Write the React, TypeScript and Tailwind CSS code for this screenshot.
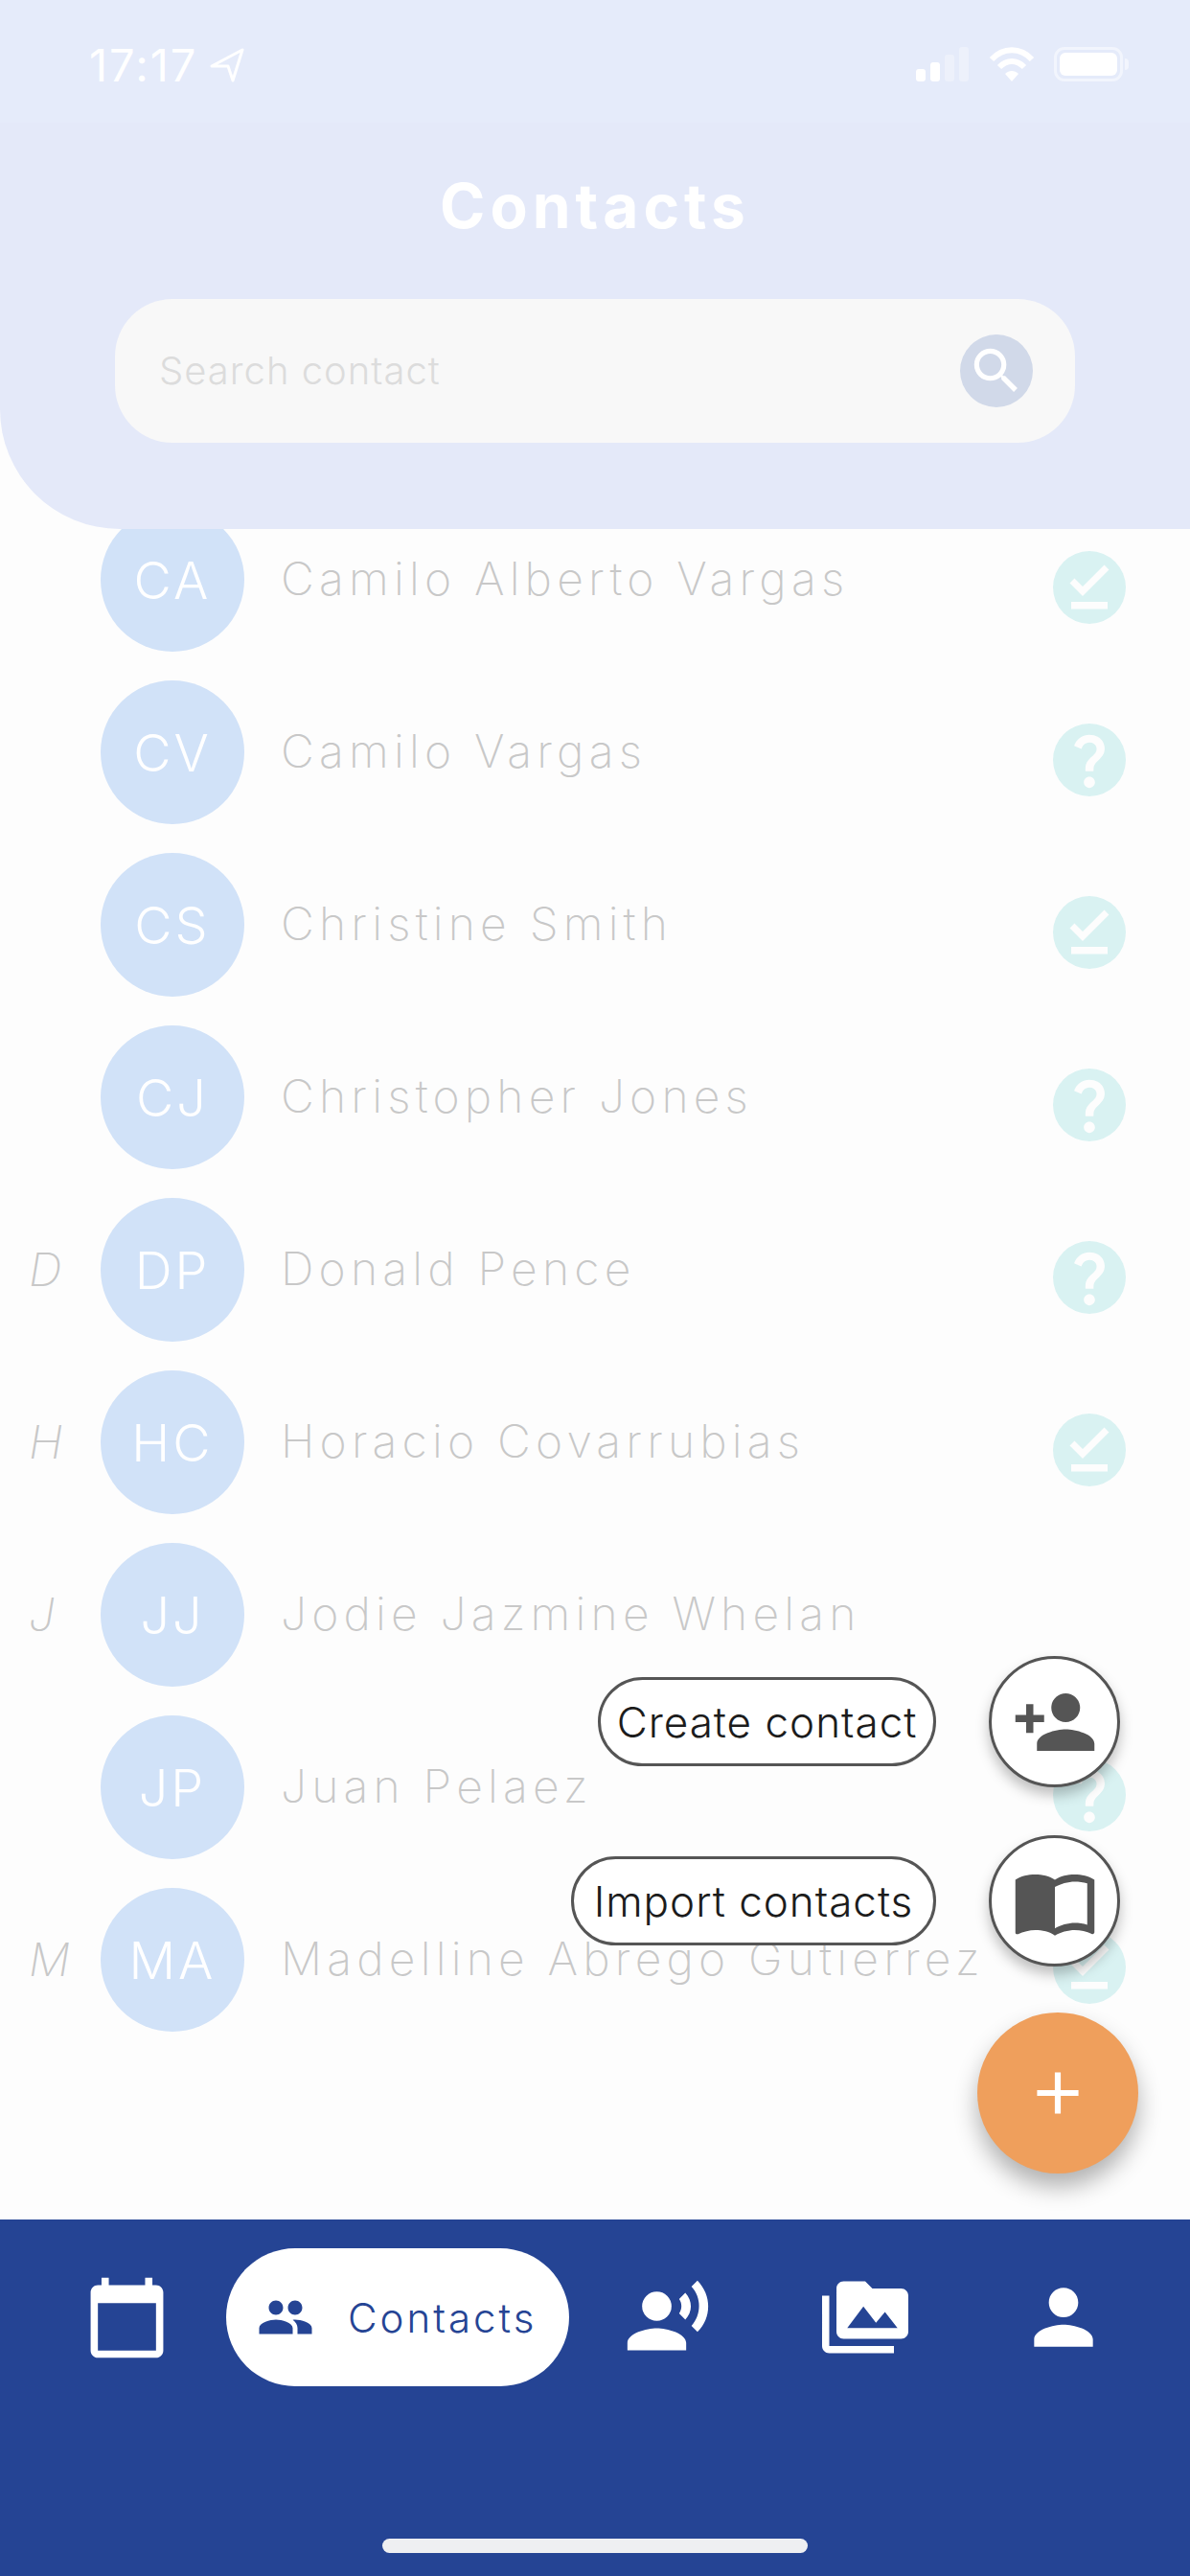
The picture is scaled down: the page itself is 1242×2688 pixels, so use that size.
import { MdAdd, MdCalendarToday, MdImportContacts, MdPeople, MdPermMedia, MdPerson, MdPersonAdd, MdQuestionMark, MdRecordVoiceOver, MdSearch } from "react-icons/md";

type Status = "done" | "unknown" | "none";

const contacts: { letter: string; initials: string; name: string; status: Status }[] = [
  { letter: "", initials: "CA", name: "Camilo Alberto Vargas", status: "done" },
  { letter: "", initials: "CV", name: "Camilo Vargas", status: "unknown" },
  { letter: "", initials: "CS", name: "Christine Smith", status: "done" },
  { letter: "", initials: "CJ", name: "Christopher Jones", status: "unknown" },
  { letter: "D", initials: "DP", name: "Donald Pence", status: "unknown" },
  { letter: "H", initials: "HC", name: "Horacio Covarrubias", status: "done" },
  { letter: "J", initials: "JJ", name: "Jodie Jazmine Whelan", status: "none" },
  { letter: "", initials: "JP", name: "Juan Pelaez", status: "unknown" },
  { letter: "M", initials: "MA", name: "Madelline Abrego Gutierrez", status: "done" },
];

function StatusBar() {
  return (
    <div className="h-[128px] bg-[#e5ebfa] flex justify-between items-start pt-[46px] pl-[93px] pr-[64px] text-white">
      <div className="flex items-center gap-[13px]">
        <span className="text-[47px] leading-[44px] font-normal tracking-[2px]">17:17</span>
        <svg width="36" height="36" viewBox="0 0 36 36" fill="none" stroke="white" strokeWidth="3" strokeLinejoin="round">
          <path d="M2 19 L34 2 L24 34 L19 19 Z" />
        </svg>
      </div>
      <div className="flex items-center gap-[20px] pt-[3px]">
        <svg width="56" height="36" viewBox="0 0 56 36" fill="white">
          <rect x="0" y="23" width="10" height="13" rx="3" />
          <rect x="15" y="16" width="10" height="20" rx="3" />
          <rect x="30" y="8" width="10" height="28" rx="3" opacity="0.3" />
          <rect x="45" y="0" width="10" height="36" rx="3" opacity="0.3" />
        </svg>
        <svg width="48" height="36" viewBox="0 0 48 36" fill="none" stroke="white" strokeWidth="6">
          <path d="M3 13 C15 0 33 0 45 13" />
          <path d="M11 21 C19 13 29 13 37 21" />
          <path d="M24 36 L17 28 C21 24 27 24 31 28 Z" fill="white" stroke="none" />
        </svg>
        <div className="flex items-center gap-[2px]">
          <div className="w-[72px] h-[36px] rounded-[11px] border-[3px] border-white/50 p-[3px]">
            <div className="w-full h-full rounded-[6px] bg-white" />
          </div>
          <div className="w-[4px] h-[12px] rounded-r-full bg-white/50" />
        </div>
      </div>
    </div>
  );
}

function Header() {
  return (
    <header className="relative z-10 h-[552px] shrink-0 bg-[#e4e9f9] rounded-bl-[125px] overflow-hidden">
      <StatusBar />
      <h1 className="mt-[50px] text-center text-white text-[64px] leading-[74px] font-bold tracking-[5px]">Contacts</h1>
      <div className="mx-[120px] mt-[60px] h-[150px] rounded-[60px] bg-[#f8f8f8] flex items-center justify-between pl-[46px] pr-[44px]">
        <span className="text-[40px] font-light text-[#dcdcdc] tracking-[1px]">Search contact</span>
        <div className="w-[76px] h-[76px] rounded-full bg-[#d1d9e9] flex items-center justify-center text-white">
          <MdSearch size={62} />
        </div>
      </div>
    </header>
  );
}

function DoneIcon() {
  return (
    <svg width="76" height="76" viewBox="0 0 76 76" fill="none" stroke="currentColor" strokeWidth="7">
      <path d="M20 31 L31 42 L56 17" />
      <rect x="19" y="53" width="38" height="7.5" fill="currentColor" stroke="none" />
    </svg>
  );
}

function Row({ letter, initials, name, status }: (typeof contacts)[number]) {
  return (
    <div className="h-[180px] flex items-center pl-[30px] pr-[67px]">
      <span className="w-[75px] text-[48px] italic font-extralight text-[#c8c8c8]">{letter}</span>
      <div className="w-[150px] h-[150px] shrink-0 rounded-full bg-[#d1e2f8] flex items-center justify-center text-white text-[54px] font-light tracking-[3px]">
        {initials}
      </div>
      <span className="ml-[38px] -mt-[2px] text-[48px] font-extralight text-[#c8c8c8] tracking-[5.2px] whitespace-nowrap">{name}</span>
      {status !== "none" && (
        <div className="ml-auto mt-[16px] w-[76px] h-[76px] shrink-0 rounded-full bg-[#d9f2f2] flex items-center justify-center text-[#fdfdfd]">
          {status === "done" ? <DoneIcon /> : <MdQuestionMark size={70} />}
        </div>
      )}
    </div>
  );
}

function QuickAction({ label, icon, pillWidth }: { label: string; icon: React.ReactNode; pillWidth: string }) {
  return (
    <div className="flex items-center justify-end gap-[55px]">
      <div className={`${pillWidth} h-[93px] rounded-full border-[3px] border-[#555555] bg-white flex items-center justify-center text-[44px] font-light tracking-[1px] text-[#1c1c1c] whitespace-nowrap`}>
        {label}
      </div>
      <div className="w-[137px] h-[137px] rounded-full border-[3px] border-[#555555] bg-white flex items-center justify-center text-[#555555] shadow-[0_8px_14px_rgba(0,0,0,0.25)]">
        {icon}
      </div>
    </div>
  );
}

function BottomNav() {
  return (
    <nav className="relative z-10 h-[372px] shrink-0 bg-[#254494] text-white pt-[30px] flex flex-col">
      <div className="h-[144px] flex items-center pl-[87px]">
        <MdCalendarToday size={91} />
        <div className="ml-[58px] w-[358px] h-[144px] rounded-full bg-white flex items-center pl-[32px] gap-[35px] text-[#254494]">
          <MdPeople size={60} />
          <span className="text-[42px] font-light tracking-[3px]">Contacts</span>
        </div>
        <MdRecordVoiceOver size={92} className="ml-[57px]" />
        <MdPermMedia size={90} className="ml-[115px]" />
        <MdPerson size={92} className="ml-[116px]" />
      </div>
      <div className="mt-[159px] mx-auto w-[444px] h-[15px] rounded-full bg-[#eeeff2]" />
    </nav>
  );
}

export default function App() {
  return (
    <div className="relative w-[1242px] h-[2688px] overflow-hidden bg-[#fdfdfd] flex flex-col font-['Inter',sans-serif]">
      <Header />
      <main className="flex-1 -mt-[37px] overflow-hidden">
        {contacts.map((c) => (
          <Row key={c.initials} {...c} />
        ))}
      </main>
      <BottomNav />

      {/* Speed dial over the list */}
      <div className="absolute right-[73px] top-[1728px] flex flex-col gap-[50px]">
        <QuickAction label="Create contact" pillWidth="w-[353px]" icon={<MdPersonAdd size={90} />} />
        <QuickAction label="Import contacts" pillWidth="w-[381px]" icon={<MdImportContacts size={90} />} />
      </div>
      <button className="absolute left-[1020px] top-[2100px] w-[168px] h-[168px] rounded-full bg-[#ef9f5c] flex items-center justify-center text-white shadow-[0_14px_24px_rgba(0,0,0,0.3)]">
        <MdAdd size={74} />
      </button>
    </div>
  );
}
